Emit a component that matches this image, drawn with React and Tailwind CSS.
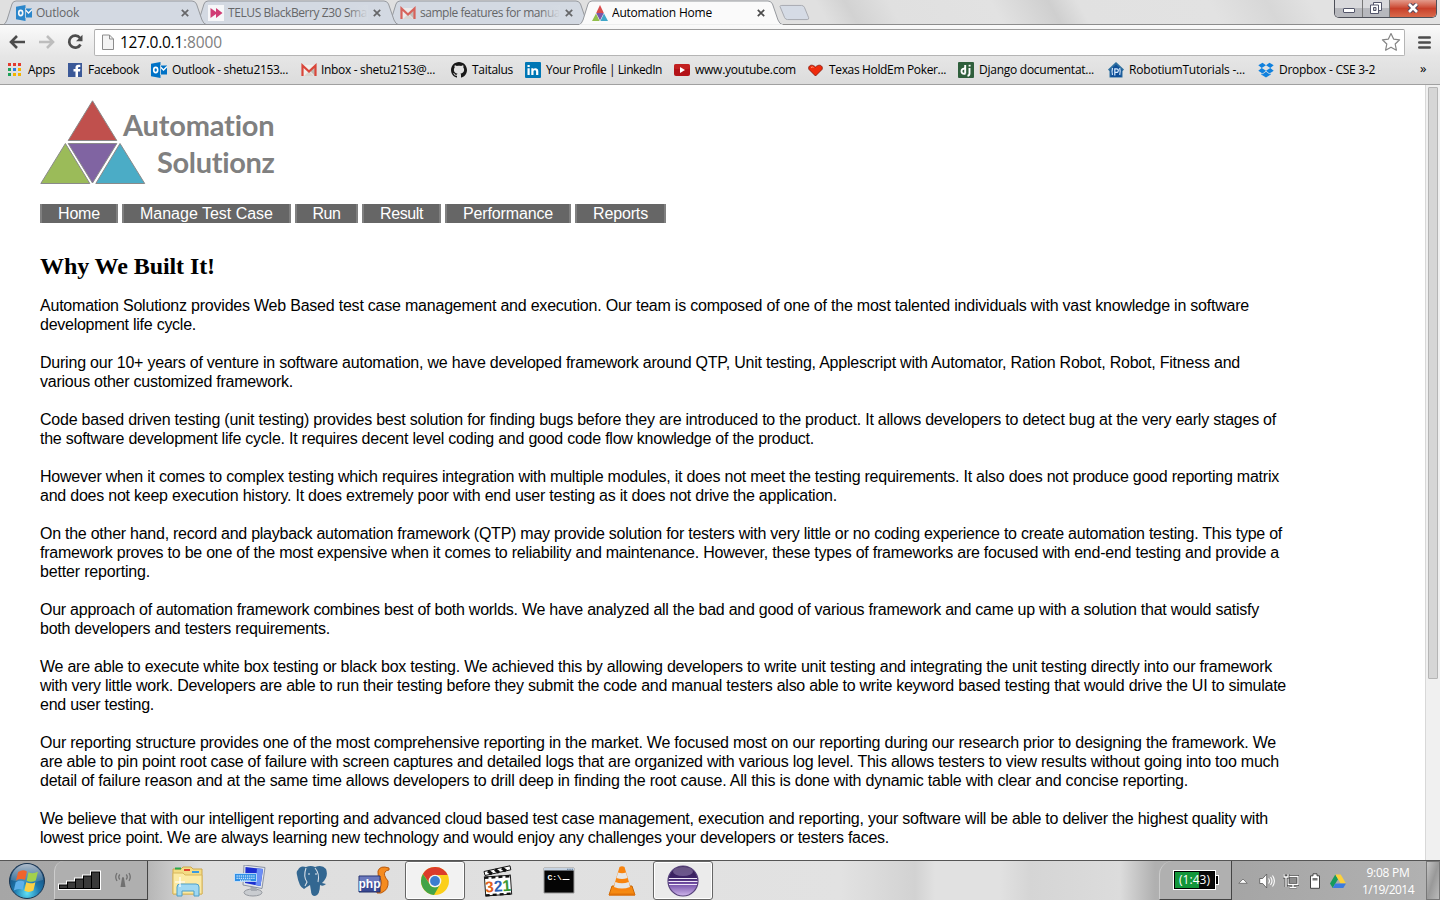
import React, { useLayoutEffect, useRef } from 'react';

// Text run tracked so that it spans its container's width.
function Fit({ className = '', children }) {
  const box = useRef(null);
  const run = useRef(null);
  useLayoutEffect(() => {
    run.current.style.letterSpacing = '0px';
    const natural = run.current.getBoundingClientRect().width;
    const target = box.current.getBoundingClientRect().width;
    run.current.style.letterSpacing = (target - natural) / String(children).length + 'px';
  }, [children]);
  return (
    <span ref={box} className={`block shrink-0 whitespace-nowrap ${className}`}>
      <span ref={run}>{children}</span>
    </span>
  );
}

/* ---------- icons ---------- */
const Svg = ({ s = 16, className = 'size-4', children }) => (
  <svg viewBox={`0 0 ${s} ${s}`} className={`block shrink-0 ${className}`}>{children}</svg>
);
const OutlookIcon = () => (
  <Svg>
    <path d="M8 3.500h8v9H8z" fill="#0072c6" />
    <path d="M9.500 5l3 3L16 4.500" stroke="#fff" strokeWidth="1.300" fill="none" />
    <path d="M0 1.700L9.500 0v16L0 14.300z" fill="#0072c6" />
    <path d="M9.500 3v10" stroke="#e3e3e3" strokeWidth=".8" />
    <ellipse cx="4.700" cy="8" rx="2" ry="2.600" fill="none" stroke="#fff" strokeWidth="1.600" />
  </Svg>
);
const GmailIcon = () => (
  <Svg>
    <path d="M1 3h14v11H1z" fill="#f1efec" />
    <path d="M3 14l5-5 5 5z" fill="#d9d5cf" />
    <path d="M9 9l5-5v10z" fill="#bdb8b1" />
    <path d="M1.500 14V3.500L8 9.500l6.500-6V14" fill="none" stroke="#d9463a" strokeWidth="2.200" />
  </Svg>
);
const TelusIcon = () => (
  <Svg>
    <path d="M0 0h16v16H0z" fill="#fff" />
    <path d="M2.500 3L8 7V3l6.500 5L8 13V9l-5.500 4z" fill="#d0165a" />
  </Svg>
);
const TriIcon = () => (
  <Svg>
    <path d="M8 0l3.800 8H4.200z" fill="#d84c4c" />
    <path d="M4.200 8h7.600L8 15.500z" fill="#7a57a8" />
    <path d="M4 8.500L7.600 16H0z" fill="#93c04c" />
    <path d="M12 8.500L16 16H8.400z" fill="#3fa7c9" />
  </Svg>
);
const AppsIcon = () => (
  <Svg>
    {[['#e33b2e', '#e33b2e', '#e33b2e'], ['#1ea15a', '#2a7de1', '#f4b400'], ['#1ea15a', '#f4b400', '#f4b400']].map((r, y) =>
      r.map((c, x) => <rect key={`${x}${y}`} x={x * 5} y={1 + y * 5} width="3" height="3" fill={c} />)
    )}
  </Svg>
);
const FacebookIcon = () => (
  <Svg>
    <path d="M0 1h14v14H0z" fill="#3b5998" />
    <path d="M7.500 15V9.500H5.500V7h2V5.600q0-2.800 2.800-2.800H12.300V5H11q-1 0-1 1v1h2.300l-.3 2.500h-2V15z" fill="#fff" />
  </Svg>
);
const GithubIcon = () => (
  <Svg>
    <path fill="#191919" d="M8 0C3.600 0 0 3.600 0 8c0 3.500 2.300 6.500 5.500 7.600.4.100.5-.2.500-.4v-1.500c-2.200.500-2.700-.9-2.700-.9-.4-.9-.9-1.200-.9-1.200-.7-.5.1-.5.100-.5.800.1 1.200.8 1.200.8.700 1.200 1.900.9 2.300.7.100-.5.300-.9.500-1.100C4.700 11.300 2.900 10.600 2.900 7.500c0-.9.300-1.600.8-2.100-.1-.2-.4-1 .1-2.100 0 0 .7-.2 2.200.8.600-.2 1.300-.3 2-.3s1.400.1 2 .3c1.500-1 2.200-.8 2.200-.8.400 1.100.200 1.900.100 2.100.5.600.8 1.300.8 2.100 0 3.100-1.900 3.800-3.700 4 .3.200.6.700.6 1.500v2.200c0 .2.100.5.600.4C13.700 14.500 16 11.500 16 8c0-4.400-3.600-8-8-8z" />
  </Svg>
);
const LinkedInIcon = () => (
  <Svg>
    <rect width="16" height="16" rx="1" fill="#0077b5" />
    <path d="M2.500 6.300h2.200V13H2.500zM2.500 3h2.200v2H2.500zM6.300 6.300h2.100v1c1-1.600 4.900-1.700 4.900 1.900V13h-2.200V9.600c0-2-2.600-1.900-2.600 0V13H6.300z" fill="#fff" />
  </Svg>
);
const YoutubeIcon = () => (
  <Svg>
    <rect y="2" width="16" height="12" rx="2" fill="#b31217" />
    <rect y="2" width="16" height="5" rx="2" fill="#cc2a26" opacity=".6" />
    <path d="M6 5l5 3-5 3z" fill="#fff" />
  </Svg>
);
const HeartIcon = () => (
  <Svg>
    <path d="M7.500 14L1 7.500C-.5 4.500 3 1 7.500 5 12 1 15.500 4.500 14 7.500z" fill="#ef2b0c" stroke="#7d1206" strokeWidth=".8" />
    <path d="M3 5.500q1.500-1 2.500 0" stroke="#ff9d80" fill="none" />
  </Svg>
);
const DjangoIcon = () => (
  <Svg>
    <rect width="16" height="16" rx="1" fill="#2f5f3c" />
    <path d="M7.200 3v8.500M7.500 7Q3.500 6 3.500 9.200T7.500 11.500M11.500 6v5.500q0 2-2 2.300" fill="none" stroke="#fff" strokeWidth="1.900" />
    <path d="M10.600 2.800h2v1.700h-2z" fill="#fff" />
  </Svg>
);
const RobotiumIcon = () => (
  <Svg>
    <path d="M8 0l8 7.500-1.500 1.800V15.500h-13V9.300L0 7.500z" fill="#2e6f9f" />
    <path d="M8 2.500l5.500 5v7.500h-11V7.500z" fill="#0f4f98" />
    <path d="M6.800 13.500V6.800h1.500q2 0 2 1.800t-2 1.700H7M4.500 6q-1 3.500 0 7M11.700 6q1 3.500 0 7" stroke="#d9ecff" strokeWidth="1.200" fill="none" />
  </Svg>
);
const DropboxIcon = () => (
  <Svg>
    <path fill="#1081de" d="M4.500.8L8 3.300 3.700 6 .3 3.300zM11.500.8L8 3.300 12.300 6l3.400-2.700zM3.700 6L8 8.800l-3.500 2.700L.3 8.700zM12.300 6L8 8.800l3.500 2.700 4.200-2.800zM8 9.700l3.500 2.500 1.300-.8v1.200L8 15.600l-4.800-3v-1.200l1.300.8z" />
  </Svg>
);

/* ---------- browser chrome ---------- */
const tabs = [
  { icon: OutlookIcon, text: 'Outlook', w: 'w-[43px]', z: 'z-30' },
  { icon: TelusIcon, text: 'TELUS BlackBerry Z30 Sma', w: 'w-[139px]', z: 'z-20', fade: true },
  { icon: GmailIcon, text: 'sample features for manua', w: 'w-[140px]', z: 'z-10', fade: true },
  { icon: TriIcon, text: 'Automation Home', w: 'w-[100px]', z: 'z-40', active: true },
];

function Tab({ tab }) {
  const Icon = tab.icon;
  return (
    <div className={`relative -mr-3 flex h-[25px] w-[204px] shrink-0 items-center pl-[13px] ${tab.z}`}>
      <svg viewBox="0 0 204 25" className="absolute inset-0 h-[25px] w-[204px]">
        <path d="M0 25Q2.500 24 4 20L9 4Q10 1 13 1H189Q192 1 193.500 4L199 20Q200.500 24 204 25z" fill={tab.active ? '#fafafa' : '#d3d9e2'} stroke="#96999e" />
        {tab.active && <path d="M.5 25.200h203" stroke="#fafafa" strokeWidth="2" />}
        {!tab.active && <path d="M0 24.500h204" stroke="#8f9195" />}
      </svg>
      <div className={`relative flex w-full items-center ${tab.active ? '' : 'opacity-80'}`}>
        <Icon />
        <div className="relative ml-1 w-[140px] overflow-hidden">
          <Fit className={`${tab.w} leading-[16px] ${tab.active ? 'text-black' : 'text-[#4a4a4a]'}`}>{tab.text}</Fit>
          {tab.fade && <span className="absolute right-0 top-0 h-4 w-5 bg-linear-to-r from-transparent to-[#d6dce4]" />}
        </div>
        <svg viewBox="0 0 8 8" className="ml-[5px] size-2">
          <path d="M.8.8l6.400 6.400M7.200.8L.8 7.200" stroke="#4a4a4a" strokeWidth="1.700" />
        </svg>
      </div>
    </div>
  );
}

const bookmarks = [
  { icon: AppsIcon, text: 'Apps', box: 'w-[60px]', w: 'w-[27px]' },
  { icon: FacebookIcon, text: 'Facebook', box: 'w-[83px]', w: 'w-[51px]' },
  { icon: OutlookIcon, text: 'Outlook - shetu2153...', gap: 'ml-[5px]', box: 'w-[150px]', w: 'w-[116px]' },
  { icon: GmailIcon, text: 'Inbox - shetu2153@...', box: 'w-[150px]', w: 'w-[114px]' },
  { icon: GithubIcon, text: 'Taitalus', gap: 'ml-[5px]', box: 'w-[74px]', w: 'w-[41px]' },
  { icon: LinkedInIcon, text: 'Your Profile | LinkedIn', gap: 'ml-[5px]', box: 'w-[149px]', w: 'w-[116px]' },
  { icon: YoutubeIcon, text: 'www.youtube.com', gap: 'ml-[5px]', box: 'w-[134px]', w: 'w-[101px]' },
  { icon: HeartIcon, text: 'Texas HoldEm Poker...', gap: 'ml-[5px]', box: 'w-[150px]', w: 'w-[117px]' },
  { icon: DjangoIcon, text: 'Django documentat...', gap: 'ml-[5px]', box: 'w-[150px]', w: 'w-[115px]' },
  { icon: RobotiumIcon, text: 'RobotiumTutorials -...', gap: 'ml-[5px]', box: 'w-[150px]', w: 'w-[116px]' },
  { icon: DropboxIcon, text: 'Dropbox - CSE 3-2', gap: 'ml-[5px]', box: 'w-[162px]', w: 'w-[96px]' },
];

function WindowButtons() {
  return (
    <div className="ml-auto mr-[3px] flex h-[18px] overflow-hidden rounded-b-[5px] border border-t-0 border-[#4d4f58]">
      <div className="flex w-[28px] items-center justify-center border-r border-[#777] bg-linear-to-b from-[#d9d9dc] from-50% to-[#b7b8bd] to-50%">
        <span className="mt-1 h-[5px] w-3 rounded-[1px] border border-[#53556a] bg-white" />
      </div>
      <div className="flex w-[27px] items-center justify-center border-r border-[#777] bg-linear-to-b from-[#d9d9dc] from-50% to-[#b7b8bd] to-50%">
        <svg viewBox="0 0 12 12" className="-mt-0.5 size-3">
          <path d="M3.500.5h8v8h-8z" fill="#fff" stroke="#53556a" />
          <path d="M.5 3h8v8.500h-8z" fill="#fff" stroke="#53556a" />
          <path d="M3.500 5.500h2.500v3H3.500z" fill="#ccc" stroke="#53556a" />
        </svg>
      </div>
      <div className="flex w-[46px] items-center justify-center bg-linear-to-b from-[#e39a8b] via-[#c8402a] via-50% to-[#d9694b]">
        <svg viewBox="0 0 12 10" className="-mt-0.5 h-[10px] w-3">
          <path d="M2 1l8 8M10 1L2 9" stroke="#53455a" strokeWidth="4.600" />
          <path d="M2 1l8 8M10 1L2 9" stroke="#fff" strokeWidth="2.600" />
        </svg>
      </div>
    </div>
  );
}

function Browser() {
  return (
    <header className="font-['Open_Sans','Noto_Sans',sans-serif] text-[12px] text-black">
      <div className="flex h-[25px] border-b border-[#8d8d8d] bg-[linear-gradient(60deg,#e0e0e0_57%,#d2d2d2_59%,#e0e0e0_62%,#e2e2e2_69%,#cfcfcf_73%,#e1e1e1_75%,#e2e2e2_84%,#d7d7d7_88%,#e2e2e2_91%)] pl-[3px]">
        {tabs.map((t) => <Tab key={t.text} tab={t} />)}
        <svg viewBox="0 0 34 17" className="ml-[8px] mt-[4px] h-[17px] w-[32px]">
          <path d="M1 2Q1 1 3 1H24Q26 1 27 3L31.500 14Q32 16 30 16H9Q7 16 6 14z" fill="#d5dbe5" stroke="#a5a8ae" />
        </svg>
        <WindowButtons />
      </div>
      <div className="flex h-[31px] items-center bg-linear-to-b from-[#fafafa] to-[#e6e6e6] pl-[9px] pr-[9px] pt-[3px]">
        <svg viewBox="0 0 16 14" className="h-[14px] w-4"><path d="M16 7H3M8 1L2 7l6 6" fill="none" stroke="#4c4c4c" strokeWidth="2.600" /></svg>
        <svg viewBox="0 0 16 14" className="ml-[14px] h-[14px] w-4"><path d="M0 7h13M8 1l6 6-6 6" fill="none" stroke="#bdbdbd" strokeWidth="2.600" /></svg>
        <svg viewBox="0 0 16 16" className="ml-[12px] mr-px size-4"><path d="M13 4A6 6 0 1 0 13.500 10.500" fill="none" stroke="#4c4c4c" strokeWidth="2.700" /><path d="M15.500 .8V7.300H9z" fill="#4c4c4c" /></svg>
        <div className="ml-[10px] flex h-[27px] flex-1 items-center rounded-[2px] border border-[#b5b5b5] border-t-[#9d9d9d] bg-white pl-[7px] pr-[3px]">
          <svg viewBox="0 0 12 16" className="h-4 w-3"><path d="M.5 1h7l4 4v10.500H.5z" fill="#f4f4f4" stroke="#8c8c8c" /><path d="M7.500 1v4h4" fill="none" stroke="#8c8c8c" /></svg>
          <div className="ml-[6px] flex text-[15.500px] leading-[20px]">
            <Fit className="w-[63px]">127.0.0.1</Fit>
            <Fit className="w-[39px] text-[#808080]">:8000</Fit>
          </div>
          <svg viewBox="0 0 20 20" className="ml-auto size-5"><path d="M10 1.500l2.600 5.600 6 .7-4.400 4.200 1.200 6.200L10 15.200l-5.400 3 1.200-6.200L1.400 7.800l6-.7z" fill="#fff" stroke="#858585" strokeWidth="1.200" strokeLinejoin="round" /></svg>
        </div>
        <svg viewBox="0 0 13 13" className="ml-[13px] size-[13px]"><path d="M1.300 1.500h10.400M1.300 6.500h10.400M1.300 11.500h10.400" stroke="#4c4c4c" strokeWidth="2.600" strokeLinecap="round" /></svg>
      </div>
      <div className="flex h-[29px] items-center border-b border-[#a0a0a0] bg-linear-to-b from-[#e6e6e6] to-[#dcdcdc] pl-2">
        {bookmarks.map((b) => {
          const Icon = b.icon;
          return (
            <div key={b.text} className={`flex shrink-0 items-center ${b.box}`}>
              <Icon />
              <Fit className={`leading-4 ${b.gap || 'ml-1'} ${b.w}`}>{b.text}</Fit>
            </div>
          );
        })}
        <span className="-mt-0.5 text-[13px]">»</span>
      </div>
    </header>
  );
}

/* ---------- page ---------- */
const nav = [
  ['Home', 'w-[78px]', 'w-[42px]'],
  ['Manage Test Case', 'w-[169px]', 'w-[133px]'],
  ['Run', 'w-[63px]', 'w-[28px]'],
  ['Result', 'w-[79px]', 'w-[43px]'],
  ['Performance', 'w-[126px]', 'w-[90px]'],
  ['Reports', 'w-[91px]', 'w-[55px]'],
];

const paragraphs = [
  [
    ['Automation Solutionz provides Web Based test case management and execution. Our team is composed of one of the most talented individuals with vast knowledge in software', 'w-[1209px]'],
    ['development life cycle.', 'w-[156px]'],
  ],
  [
    ['During our 10+ years of venture in software automation, we have developed framework around QTP, Unit testing, Applescript with Automator, Ration Robot, Robot, Fitness and', 'w-[1200px]'],
    ['various other customized framework.', 'w-[253px]'],
  ],
  [
    ['Code based driven testing (unit testing) provides best solution for finding bugs before they are introduced to the product. It allows developers to detect bug at the very early stages of', 'w-[1236px]'],
    ['the software development life cycle. It requires decent level coding and good code flow knowledge of the product.', 'w-[774px]'],
  ],
  [
    ['However when it comes to complex testing which requires integration with multiple modules, it does not meet the testing requirements. It also does not produce good reporting matrix', 'w-[1239px]'],
    ['and does not keep execution history. It does extremely poor with end user testing as it does not drive the application.', 'w-[797px]'],
  ],
  [
    ['On the other hand, record and playback automation framework (QTP) may provide solution for testers with very little or no coding experience to create automation testing. This type of', 'w-[1242px]'],
    ['framework proves to be one of the most expensive when it comes to reliability and maintenance. However, these types of frameworks are focused with end-end testing and provide a', 'w-[1239px]'],
    ['better reporting.', 'w-[110px]'],
  ],
  [
    ['Our approach of automation framework combines best of both worlds. We have analyzed all the bad and good of various framework and came up with a solution that would satisfy', 'w-[1219px]'],
    ['both developers and testers requirements.', 'w-[290px]'],
  ],
  [
    ['We are able to execute white box testing or black box testing. We achieved this by allowing developers to write unit testing and integrating the unit testing directly into our framework', 'w-[1232px]'],
    ['with very little work. Developers are able to run their testing before they submit the code and manual testers also able to write keyword based testing that would drive the UI to simulate', 'w-[1246px]'],
    ['end user testing.', 'w-[114px]'],
  ],
  [
    ['Our reporting structure provides one of the most comprehensive reporting in the market. We focused most on our reporting during our research prior to designing the framework. We', 'w-[1236px]'],
    ['are able to pin point root case of failure with screen captures and detailed logs that are organized with various log level. This allows testers to view results without going into too much', 'w-[1239px]'],
    ['detail of failure reason and at the same time allows developers to drill deep in finding the root cause. All this is done with dynamic table with clear and concise reporting.', 'w-[1148px]'],
  ],
  [
    ['We believe that with our intelligent reporting and advanced cloud based test case management, execution and reporting, your software will be able to deliver the highest quality with', 'w-[1228px]'],
    ['lowest price point. We are always learning new technology and would enjoy any challenges your developers or testers faces.', 'w-[849px]'],
  ],
];

function Logo() {
  return (
    <div className="flex h-[85px]">
      <svg viewBox="0 0 106 85" className="h-[85px] w-[106px]" stroke="#8a8a8a" strokeWidth="1">
        <path d="M52.500.8L76.800 40.500H28.200z" fill="#c0504d" />
        <path d="M28.200 43.500h48.600L52.500 83z" fill="#8064a2" />
        <path d="M25.400 43.500L49.800 83.500H.8z" fill="#9bbb59" />
        <path d="M80 43.500L104.700 83.500H55.800z" fill="#4bacc6" />
      </svg>
      <div className="-ml-[23px] flex w-[152px] flex-col items-end pt-[6px] font-['Lato',sans-serif] text-[29px] font-bold leading-[37px] text-[#808080]">
        <Fit className="w-[152px]">Automation</Fit>
        <Fit className="w-[118px]">Solutionz</Fit>
      </div>
    </div>
  );
}

function Page() {
  return (
    <div className="flex min-h-0 flex-1 bg-white">
      <main className="flex-1 overflow-hidden pl-10 pt-[15px] font-['Liberation_Sans',Arial,sans-serif] text-base leading-[19px] text-black">
        <Logo />
        <nav className="mt-[19px] flex gap-1 text-white">
          {nav.map(([t, box, w]) => (
            <a key={t} className={`flex h-[19px] justify-center border-x-2 border-[#808080] bg-[#666] ${box}`}>
              <Fit className={w}>{t}</Fit>
            </a>
          ))}
        </nav>
        <h2 className="mt-[30px] font-['Liberation_Serif',serif] text-2xl font-bold leading-[27px]">
          <Fit className="w-[175px]">Why We Built It!</Fit>
        </h2>
        <div className="mt-4 flex flex-col gap-[19px]">
          {paragraphs.map((lines, i) => (
            <p key={i}>
              {lines.map(([t, w]) => <Fit key={t} className={w}>{t}</Fit>)}
            </p>
          ))}
        </div>
      </main>
      <div className="w-[15px] border-l border-[#d8d8d8] bg-[#f0f0f0] pl-[2px] pt-[2px]">
        <div className="h-[592px] w-[10px] rounded-[1px] border border-[#b5b5b5] bg-[#d6d6d6]" />
      </div>
    </div>
  );
}

/* ---------- taskbar ---------- */
const StartIcon = () => (
  <svg viewBox="0 0 38 38" className="size-[38px]">
    <defs>
      <radialGradient id="orb" cx=".5" cy=".85" r=".8"><stop offset="0" stopColor="#5fe0f5" /><stop offset=".45" stopColor="#1c78ae" /><stop offset="1" stopColor="#17406b" /></radialGradient>
      <linearGradient id="shine" x2="0" y2="1"><stop offset="0" stopColor="#fff" stopOpacity=".65" /><stop offset="1" stopColor="#fff" stopOpacity=".1" /></linearGradient>
    </defs>
    <circle cx="19" cy="19" r="17.500" fill="url(#orb)" stroke="#1b3550" />
    <path d="M3 18A16 16 0 0 1 35 18Q19 23 3 18z" fill="url(#shine)" />
    <g transform="translate(-3.500 -3) scale(1.180)">
      <path d="M11.500 11q4-2.500 7.500-.5l-1.600 7.300q-3.900-1.700-7.600.4z" fill="#f0642c" />
      <path d="M20.300 11.300q3.700 1.900 8-.4l-1.800 7.300q-4 2-7.700.3z" fill="#a3d04c" />
      <path d="M9.500 19.600q3.800-2.200 7.500-.4L15.400 26q-3.700-1.600-7.500.6z" fill="#5db0ea" />
      <path d="M18.400 19.800q4 1.800 7.800-.2l-1.700 7.200q-4 2.200-7.700.2z" fill="#fbd044" />
    </g>
  </svg>
);
const FolderIcon = () => (
  <svg viewBox="0 0 32 32" className="size-8">
    <path d="M1 4h8l2-2h8l2 2h9v25H1z" fill="#f3dc84" stroke="#cfa94c" />
    <path d="M3 2.500h6v2H3z" fill="#2aa84a" /><path d="M12 4h6v2h-6z" fill="#e0402c" /><path d="M20 6h7v2h-7z" fill="#3a9be0" />
    <path d="M1 8h10l2 2h17v19H1z" fill="#fbeaa4" stroke="#d9b75c" />
    <path d="M5 31V22q0-3 3-3h16q3 0 3 3v9h-5v-5H10v5z" fill="#9fd8f2" stroke="#4c9fc9" />
    <path d="M8 12v10M3 17h10" stroke="#fff" strokeWidth="1.200" />
  </svg>
);
const KeyboardPcIcon = () => (
  <svg viewBox="0 0 32 32" className="size-8">
    <ellipse cx="19" cy="27.500" rx="9" ry="3.500" fill="#c9ccd0" stroke="#94989e" />
    <path d="M16 19h6l1 7h-6z" fill="#a7abb1" />
    <path d="M10 0l21 2.500-3 21L9 20z" fill="#e2e6ec" stroke="#8b93a3" />
    <path d="M11.500 2l17.500 2-2.500 17L11 18z" fill="#1d2fd0" />
    <path d="M23 3.300l6 .7-2.500 17-5-1z" fill="#6c8ff5" />
    <path d="M.5 8.500h22v8H.5z" fill="#2e8fe6" stroke="#d5eafc" strokeWidth=".8" />
    <path d="M2.500 11h18.500M2.500 13.200h18.500M6 15.200h11" stroke="#fff" strokeWidth="1.100" strokeDasharray="1.300 .8" />
  </svg>
);
const ElephantIcon = () => (
  <svg viewBox="0 0 32 32" className="size-8">
    <path d="M2 5Q4 0 10 2q5-2 9 0 7-3 11 2 3 8-4 14l4 1q-3 3-6 1 0 10-5 11-4 0-4-5l-1-6q-5 3-6 4-5-2-7-14-1-4 1-5z" fill="#336791" />
    <path d="M10 3Q7 12 11 17l-2 4M19 3q5 6 3 14" fill="none" stroke="#d7dee6" strokeWidth="1.100" />
    <circle cx="13" cy="9" r=".8" fill="#fff" /><circle cx="20" cy="9" r=".8" fill="#fff" />
  </svg>
);
const PhpIcon = () => (
  <svg viewBox="0 0 32 32" className="size-8">
    <path d="M31 3q-9-3-11 3-1 5 3 9 2 6-4 11v2h4q8-3 7-12-5-6-3-9 1.500-2 4-2z" fill="#f58b1f" stroke="#b9590c" />
    <path d="M1 11h21v16H1z" fill="#3b4a94" stroke="#232e6b" />
    <path d="M1.500 11.500h20v6h-20z" fill="#6b79bd" />
    <text x="11.500" y="23" textAnchor="middle" fontFamily="Liberation Sans" fontWeight="bold" fontSize="12" fill="#fff">php</text>
  </svg>
);
const ChromeIcon = () => (
  <svg viewBox="0 0 30 30" className="size-[30px]">
    <circle cx="15" cy="15" r="14" fill="#fbcf1b" />
    <path d="M2.900 8A14 14 0 0 1 27.600 9H15a6 6 0 0 0-5.700 8z" fill="#dc3b2b" />
    <path d="M2.900 8A14 14 0 0 0 14 29l6-10.500a6 6 0 0 1-10.700-1z" fill="#42a348" />
    <circle cx="15" cy="15" r="6.300" fill="#f4f4f4" /><circle cx="15" cy="15" r="4.900" fill="#3b7dd0" />
  </svg>
);
const ClapperIcon = () => (
  <svg viewBox="0 0 32 32" className="size-8">
    <g transform="rotate(-4 16 20)">
      <path d="M3 11h26v19H3z" fill="#fff" stroke="#222" />
      <path d="M3 12h26M3 29.500h26" stroke="#111" strokeWidth="2.400" strokeDasharray="4 3" />
      <text x="16" y="26.500" textAnchor="middle" fontFamily="Liberation Sans" fontWeight="bold" fontSize="15.500"><tspan fill="#e2631c">3</tspan><tspan fill="#2c62b5">2</tspan><tspan fill="#3b9a34">1</tspan></text>
    </g>
    <path d="M2 6.500L28 .8l.8 4L3 10.500z" fill="#fff" stroke="#111" />
    <path d="M6 6l4 3M13 4.500l4 3M20 3l4 3" stroke="#111" strokeWidth="3.200" />
  </svg>
);
const CmdIcon = () => (
  <svg viewBox="0 0 32 28" className="h-[28px] w-8">
    <path d="M1 1h30v25H1z" fill="#050505" stroke="#9a9a9a" />
    <path d="M1 1h30v2.500H1z" fill="#c6d3e2" /><path d="M24 2.300h6" stroke="#5d7896" strokeDasharray="1.500 .8" />
    <text x="4.500" y="13" fontFamily="Liberation Mono" fontWeight="bold" fontSize="8" fill="#fff">C:\</text>
    <path d="M19.500 12.500h7" stroke="#fff" />
  </svg>
);
const VlcIcon = () => (
  <svg viewBox="0 0 30 32" className="h-8 w-[30px]">
    <path d="M5 21h20l3 9H2z" fill="#f58a12" stroke="#c96606" />
    <path d="M12.500 2q2.500-1.500 5 0L24 24q-9 4.500-18 0z" fill="#f8840f" />
    <path d="M11 7.500q4 1.500 8 0l1.500 5.500q-5.500 2-11 0zM8.300 17q6.700 2.500 13.400 0l1.300 5q-8 3-16 0z" fill="#e6e6e6" />
    <path d="M2 28.500h26v2H2z" fill="#e07107" />
  </svg>
);
const EclipseIcon = () => (
  <svg viewBox="0 0 32 32" className="size-8">
    <defs><linearGradient id="ecl" x2="0" y2="1"><stop offset="0" stopColor="#35204f" /><stop offset=".4" stopColor="#3e2468" /><stop offset=".6" stopColor="#7450a8" /><stop offset="1" stopColor="#cfb6ec" /></linearGradient></defs>
    <circle cx="16" cy="16" r="15" fill="url(#ecl)" stroke="#57427c" strokeWidth="1.200" />
    <ellipse cx="16" cy="6.500" rx="10" ry="4.500" fill="#a996c4" opacity=".45" />
    <path d="M2 13.500h28M1.500 16.500h29M2 19.500h28" stroke="#efe8f8" strokeWidth="1.200" />
  </svg>
);

function Taskbar() {
  const pinned = [
    [FolderIcon, 'w-[62px]'], [KeyboardPcIcon, 'w-[62px]'], [ElephantIcon, 'w-[62px]'], [PhpIcon, 'w-[62px]'],
    [ChromeIcon, 'w-[60px] mr-[2px] rounded-[3px] border border-[#666] bg-[#f2f2f2] shadow-[inset_0_0_0_1px_#fff]'],
    [ClapperIcon, 'w-[61px]'], [CmdIcon, 'w-[62px]'], [VlcIcon, 'w-[63px]'],
    [EclipseIcon, 'w-[60px] rounded-[3px] border border-[#666] bg-[#ebebeb] shadow-[inset_0_0_0_1px_#fff]'],
  ];
  return (
    <footer className="flex h-10 shrink-0 border-t border-[#555] bg-[linear-gradient(90deg,#a6a6a6_0,#aaa_146px,#b8b8b8_150px,#dedede_200px,#e2e2e2_840px,#d2d2d2_915px,#e1e1e1_935px,#e1e1e1_1000px,#d5d5d5_1030px,#dcdcdc_1120px,#b0b0b0_1155px,#a9a9a9_1440px)] font-['Open_Sans','Noto_Sans',sans-serif]">
      <div className="flex w-[54px] items-center pl-2"><StartIcon /></div>
      <div className="flex w-[94px] items-center rounded-tl-[10px] border-b border-l border-r border-b-[#444] border-l-[#ccc] border-r-[#444] bg-[#afafaf] pl-[3px]">
        <svg viewBox="0 0 44 20" className="h-5 w-11">
          <path d="M1 19V14.500H9V11.500H17V8.500H25V5.500H33V1.500H42V19z" fill="#fff" stroke="#fff" strokeWidth="2" />
          <rect x="1.500" y="15" width="8" height="3.500" fill="#3a3a3a" stroke="#000" />
          <rect x="9.500" y="12" width="8" height="6.500" fill="#3a3a3a" stroke="#000" />
          <rect x="17.500" y="9" width="8" height="9.500" fill="#3a3a3a" stroke="#000" />
          <rect x="25.500" y="6" width="8" height="12.500" fill="#3a3a3a" stroke="#000" />
          <rect x="33.500" y="2" width="8" height="16.500" fill="#3a3a3a" stroke="#000" />
        </svg>
        <svg viewBox="0 0 16 16" className="ml-[13px] size-4" fill="none" stroke="#707070" strokeWidth="1.300">
          <path d="M8 5v2M4.800 2.500q-2 2.500 0 5M11.200 2.500q2 2.500 0 5M2 1q-2.500 4 0 8M14 1q2.500 4 0 8" /><path d="M7 6h2l1.500 9h-5z" fill="#707070" stroke="none" />
        </svg>
      </div>
      <div className="flex pl-[9px]">
        {pinned.map(([Icon, box], i) => <div key={i} className={`flex h-[39px] items-center justify-center ${box}`}><Icon /></div>)}
      </div>
      <div className="ml-auto flex w-[73px] items-center rounded-tl-[14px] border-b border-l border-r border-b-[#444] border-l-[#ccc] border-r-[#444] bg-[#b0b0b0] pl-[13px]">
        <div className="flex h-[20px] w-[43px] items-center justify-center border border-white bg-linear-to-r from-[#12963a] from-60% to-[#0a0a0a] to-60% text-[12px] text-white shadow-[inset_0_0_0_1px_#000]"><Fit className="w-[31px]">(1:43)</Fit></div>
        <span className="h-[10px] w-[3px] border border-l-0 border-white bg-black" />
      </div>
      <div className="flex w-[208px] items-center bg-linear-to-r from-[#a5a5a5] to-[#b2b2b2] pl-[6px]">
        <svg viewBox="0 0 10 6" className="h-[6px] w-[10px]"><path d="M.8 5.300L5 1l4.200 4.300z" fill="#fff" stroke="#666" strokeWidth=".8" /></svg>
        <svg viewBox="0 0 16 16" className="ml-[11px] size-4"><path d="M.7 5.500h3l4-4.500v14l-4-4.500h-3z" fill="#fff" stroke="#555" strokeWidth=".8" /><path d="M9.500 5.500q2 2.500 0 5M11.500 4q3 4 0 8M13.500 2.500q3.800 5.500 0 11" fill="none" stroke="#fff" strokeWidth="1.100" /></svg>
        <svg viewBox="0 0 16 16" className="ml-[8px] mr-px size-4"><path d="M5 3.500h10v8H5z" fill="#8c8c8c" stroke="#444" strokeWidth="3" /><path d="M10 12v2.500M6.500 14.500h7" fill="none" stroke="#444" strokeWidth="2.600" /><path d="M5 3.500h10v8H5zM10 12v2.500M6.500 14.500h7" fill="none" stroke="#fff" strokeWidth="1.300" /><path d="M1 1v3h4V1M3 4v10" fill="none" stroke="#444" strokeWidth="2.800" /><path d="M1 1v3h4V1M3 4v10" fill="none" stroke="#fff" strokeWidth="1.300" /></svg>
        <svg viewBox="0 0 12 16" className="ml-[9px] h-4 w-3"><path d="M4 .8h4v2h2.500v12.500h-9V2.800H4z" fill="#fff" stroke="#444" /><path d="M3.500 5h5v2.500h-5z" fill="#777" /></svg>
        <svg viewBox="0 0 16 16" className="ml-[9px] size-4"><path d="M5.300 1.500L8 6.200 2.700 15 0 10.500z" fill="#169b5c" /><path d="M5.300 1.500h5.400L16 10.500h-5.300z" fill="#fdd13a" /><path d="M5.300 10.500H16L13.300 15H2.700z" fill="#3b7be0" /></svg>
        <div className="ml-[15px] flex w-[54px] flex-col items-center text-[12px] leading-[17px] text-white">
          <Fit className="w-[43px]">9:08 PM</Fit>
          <Fit className="w-[52px]">1/19/2014</Fit>
        </div>
        <div className="ml-auto h-[39px] w-[14px] border border-[#777] bg-linear-to-br from-[#c4c4c4] via-[#999] to-[#bbb]" />
      </div>
    </footer>
  );
}

export default function App() {
  return (
    <div className="flex h-[900px] w-[1440px] flex-col overflow-hidden bg-white">
      <Browser />
      <Page />
      <Taskbar />
    </div>
  );
}
